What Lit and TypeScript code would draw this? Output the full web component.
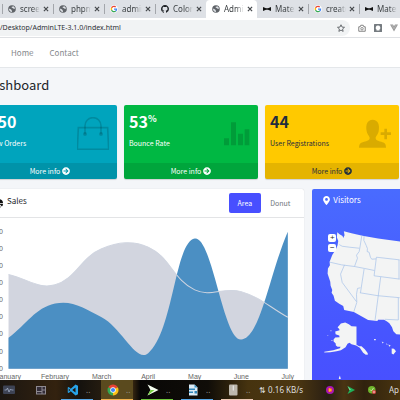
import { LitElement, html, css, svg } from "lit";
import { customElement } from "lit/decorators.js";
import { classMap } from "lit/directives/class-map.js";

const globe = svg`<svg viewBox="0 0 16 16"><circle cx="8" cy="8" r="7.6" fill="#5f6368"/><path d="M2 7.500c2 .2 3 1 4.200 1.400 1 .5.3 1.800 1.500 2.200.8.4.2 1.900.1 3-3.400-.3-6-3-5.800-6.600zM7 2c1 .8 2.600.3 2.400 1.700-.3 1-1.900.6-2.200 1.800.5 1.300 2.400.6 3.400 1.300 1 .8 1.900 1 3.400.7 0-2.800-2.700-5.700-7-5.500z" fill="#dee1e6"/></svg>`;
const google = svg`<svg viewBox="-5 -5 58 58"><circle cx="24" cy="24" r="28" fill="#fff"/><path fill="#EA4335" d="M24 9.500c3.540 0 6.710 1.220 9.210 3.600l6.850-6.850C35.900 2.380 30.470 0 24 0 14.620 0 6.510 5.380 2.560 13.220l7.980 6.190C12.430 13.720 17.740 9.500 24 9.500z"/><path fill="#4285F4" d="M46.980 24.550c0-1.570-.15-3.090-.38-4.550H24v9.020h12.940c-.58 2.960-2.260 5.480-4.780 7.180l7.730 6c4.510-4.180 7.090-10.360 7.090-17.650z"/><path fill="#FBBC05" d="M10.530 28.590c-.48-1.450-.76-2.990-.76-4.590s.27-3.140.76-4.590l-7.980-6.190C.92 16.460 0 20.120 0 24s.92 7.540 2.560 10.780l7.970-6.190z"/><path fill="#34A853" d="M24 48c6.480 0 11.930-2.130 15.890-5.810l-7.730-6c-2.150 1.450-4.920 2.300-8.160 2.300-6.260 0-11.570-4.220-13.470-9.910l-7.980 6.190C6.510 42.620 14.620 48 24 48z"/></svg>`;
const github = svg`<svg viewBox="0 0 16 16"><path fill="#1b1f23" d="M8 0C3.58 0 0 3.58 0 8c0 3.54 2.29 6.53 5.47 7.59.4.07.55-.17.55-.38 0-.19-.01-.82-.01-1.49-2.01.37-2.53-.49-2.69-.94-.09-.23-.48-.94-.82-1.13-.28-.15-.68-.52-.01-.53.63-.01 1.08.58 1.23.82.72 1.21 1.87.87 2.33.66.07-.52.28-.87.51-1.07-1.78-.2-3.64-.89-3.64-3.95 0-.87.31-1.59.82-2.15-.08-.2-.36-1.02.08-2.12 0 0 .67-.21 2.2.82.64-.18 1.32-.27 2-.27.68 0 1.36.09 2 .27 1.53-1.04 2.2-.82 2.2-.82.44 1.1.16 1.92.08 2.12.51.56.82 1.27.82 2.15 0 3.07-1.87 3.75-3.65 3.95.29.25.54.73.54 1.48 0 1.07-.01 1.93-.01 2.2 0 .21.15.46.55.38A8.013 8.013 0 0016 8c0-4.42-3.58-8-8-8z"/></svg>`;
const bowtie = svg`<svg viewBox="0 0 16 16"><path fill="#111" d="M0 4l6 2.500h4L16 4v8l-6-2.500H6L0 12z"/></svg>`;
const close = svg`<svg viewBox="0 0 10 10"><path d="M1.500 1.500l7 7m0-7l-7 7" stroke="#45484c" stroke-width="2" fill="none"/></svg>`;
const arrow = svg`<svg viewBox="0 0 512 512"><path fill="currentColor" d="M256 8c137 0 248 111 248 248S393 504 256 504 8 393 8 256 119 8 256 8zm-28.900 143.600l75.500 72.400H120c-13.300 0-24 10.700-24 24v16c0 13.300 10.700 24 24 24h182.600l-75.500 72.400c-9.700 9.300-9.900 24.800-.4 34.300l11 10.900c9.400 9.400 24.600 9.400 33.900 0L404.300 273c9.400-9.400 9.400-24.600 0-33.900L271.600 106.300c-9.400-9.400-24.600-9.400-33.900 0l-11 10.900c-9.500 9.600-9.300 25.100.4 34.400z"/></svg>`;

const bag = svg`<svg viewBox="0 0 96 100"><path d="M4 32H92L95 97H1Z" fill="none" stroke="currentColor" stroke-width="5"/><path d="M24 52V26a24 24 0 0 1 48 0V52" fill="none" stroke="currentColor" stroke-width="5"/><circle cx="24" cy="51" r="6" fill="currentColor"/><circle cx="72" cy="51" r="6" fill="currentColor"/></svg>`;
const bars = svg`<svg viewBox="0 0 96 100"><path fill="currentColor" d="M18 64h15v21H18zM39 16h15v69H39zM60 50h15v35H60zM80 37h14v48H80z"/></svg>`;
const person = svg`<svg viewBox="0 0 96 100"><path fill="currentColor" d="M0 92c0-12 5-15 15-18 9-2 17-4 17-11 0-5-7-9-9-20-4-20 2-35 18-35s22 15 18 35c-2 11-9 15-9 20 0 7 8 9 17 11 10 3 14 6 14 18zM76 35h8v11h12v8H84v13h-8V54H65v-8h11z"/></svg>`;

const tabs = [
  { icon: globe, text: "screen" },
  { icon: globe, text: "phpmy" },
  { icon: google, text: "admin" },
  { icon: github, text: "Colorl" },
  { icon: globe, text: "Admin", active: true },
  { icon: bowtie, text: "Mater" },
  { icon: google, text: "create" },
  { icon: bowtie, text: "Mater" },
];

const stats = [
  { kind: "teal", value: "150", unit: "", label: "New Orders", icon: bag },
  { kind: "green", value: "53", unit: "%", label: "Bounce Rate", icon: bars },
  { kind: "yellow", value: "44", unit: "", label: "User Registrations", icon: person },
];

const months = ["January", "February", "March", "April", "May", "June", "July"];
const digital = [28, 48, 40, 19, 86, 27, 90];
const electronics = [65, 59, 80, 81, 56, 55, 40];

const LEFT = 25.5;
const STEP = 46.5;
const BASE = 150.5;
const UNIT = 1.71;
const yOf = (v: number) => BASE - (v - 10) * UNIT;

// Smooth curve through the values, with control points weighted by segment length.
function curve(values: number[]): string {
  const p = values.map((v, i) => ({ x: LEFT + i * STEP, y: yOf(v) }));
  const clamp = (y: number) => Math.min(BASE, Math.max(yOf(90), y));
  const ctl = p.map((c, i) => {
    const a = p[i - 1] ?? c;
    const b = p[i + 1] ?? c;
    const d0 = Math.hypot(c.x - a.x, c.y - a.y);
    const d1 = Math.hypot(b.x - c.x, b.y - c.y);
    const f0 = (0.4 * d0) / (d0 + d1);
    const f1 = (0.4 * d1) / (d0 + d1);
    return {
      inX: c.x - f0 * (b.x - a.x), inY: clamp(c.y - f0 * (b.y - a.y)),
      outX: c.x + f1 * (b.x - a.x), outY: clamp(c.y + f1 * (b.y - a.y)),
    };
  });
  let d = `M${p[0].x} ${p[0].y}`;
  for (let i = 1; i < p.length; i++) {
    d += `C${ctl[i - 1].outX} ${ctl[i - 1].outY} ${ctl[i].inX} ${ctl[i].inY} ${p[i].x} ${p[i].y}`;
  }
  return d;
}
const area = (values: number[]) => `${curve(values)}V${BASE}H${LEFT}Z`;

@customElement("browser-bar")
class BrowserBar extends LitElement {
  static styles = css`
    :host { display: block; font-family: "Noto Sans", sans-serif; color: #3c4043; }
    svg { display: block; }
    .tabs { display: flex; height: 18px; background: #dee1e6; padding-left: 2px; overflow: hidden; }
    .tab { flex: 0 0 51px; min-width: 0; box-sizing: border-box; display: flex; align-items: center; padding: 0 4px 0 6px; position: relative; }
    .tab::before { content: ""; position: absolute; left: 0; top: 4px; height: 10px; width: 1px; background: #a3a6ab; }
    .tab.plain::before { display: none; }
    .tab.active { background: #fff; border-radius: 4px 4px 0 0; }
    .icon { width: 8px; height: 8px; flex: none; }
    .label { flex: 1; min-width: 0; margin: 0 3px 0 4px; font-size: 8px; line-height: 12px; white-space: nowrap; overflow: hidden; -webkit-mask-image: linear-gradient(90deg, #000 60%, transparent); mask-image: linear-gradient(90deg, #000 60%, transparent); }
    .close { all: unset; width: 6px; height: 6px; flex: none; }
    .bar { display: flex; align-items: center; height: 19px; background: #fff; border-bottom: 1px solid #dfe1e4; overflow: hidden; }
    .pill { flex: 1; min-width: 0; display: flex; align-items: center; height: 16px; padding-right: 5px; background: #f1f3f4; border-radius: 0 8px 8px 0; }
    .url { flex: 1; min-width: 0; border: 0; padding: 0; background: none; outline: none; font: 7px/12px "Noto Sans", sans-serif; color: #2c3034; }
    .tool { all: unset; width: 8px; height: 8px; flex: none; }
    .tools { display: flex; gap: 8px; margin: 0 2px 0 8px; }
  `;
  render() {
    return html`
      <div class="tabs">
        ${tabs.map((t, i) => html`<div class=${classMap({ tab: true, active: !!t.active, plain: i === 4 || i === 5 })}>
          <span class="icon">${t.icon}</span><span class="label">${t.text}</span>
          <button class="close" aria-label="Close tab">${close}</button>
        </div>`)}
      </div>
      <div class="bar">
        <div class="pill">
          <input class="url" aria-label="Address" value="/Desktop/AdminLTE-3.1.0/index.html" />
          <button class="tool" aria-label="Bookmark"><svg viewBox="0 0 16 16"><path d="M8 1.500l2 4.600 5 .5-3.800 3.300 1.100 4.900L8 12.200l-4.300 2.600 1.100-4.900L1 6.600l5-.5z" fill="none" stroke="#4b4f54" stroke-width="1.600"/></svg></button>
        </div>
        <div class="tools">
          <button class="tool" aria-label="Camera"><svg viewBox="0 0 16 16"><path d="M1.500 5.500h3l1-3h5l1 3h3v9h-13z" fill="none" stroke="#777" stroke-width="1.800"/><circle cx="8" cy="9.500" r="2.500" fill="none" stroke="#777" stroke-width="1.600"/></svg></button>
          <button class="tool" aria-label="Extension"><svg viewBox="0 0 16 16"><rect width="16" height="16" rx="1" fill="#757b80"/><path d="M8 3a4.500 4.500 0 0 1 3 8v2H5v-2a4.500 4.500 0 0 1 3-8z" fill="#fff"/></svg></button>
          <button class="tool" aria-label="Vue tools"><svg viewBox="0 0 16 16"><path d="M0 1h6l2 3.500L10 1h6L8 15z" fill="#999"/><path d="M3.200 1L8 9.500 12.800 1" stroke="#ccc" fill="none"/></svg></button>
        </div>
      </div>`;
  }
}

@customElement("stat-box")
class StatBox extends LitElement {
  static properties = { data: { attribute: false } };
  declare data: (typeof stats)[number];
  static styles = css`
    :host { display: block; min-width: 0; }
    .box { border-radius: 2px; overflow: hidden; color: #fff; box-shadow: 0 1px 1px rgba(0, 0, 0, 0.15); }
    .teal { background: #00a4bd; }
    .green { background: #00b843; }
    .yellow { background: #ffc900; color: #1f2d3d; }
    .inner { display: flex; justify-content: space-between; height: 58px; padding: 0 8px 0 5px; }
    .value { margin: 6px 0 0; font-size: 16px; line-height: 20px; font-weight: 700; }
    .unit { font-size: 9px; line-height: 10px; vertical-align: 6px; }
    .label { margin: 6px 0 0; font-size: 7px; line-height: 12px; white-space: nowrap; }
    .icon { flex: none; width: 32px; height: 33px; margin-top: 12px; color: rgba(0, 0, 0, 0.15); }
    .more { display: flex; align-items: center; justify-content: center; gap: 2px; height: 16px; background: rgba(0, 0, 0, 0.1); color: inherit; text-decoration: none; font-size: 7px; line-height: 12px; }
    .dot { width: 8px; height: 8px; }
    svg { display: block; }
  `;
  render() {
    const s = this.data;
    return html`<div class="box ${s.kind}">
      <div class="inner">
        <div>
          <h3 class="value">${s.value}${s.unit ? html`<span class="unit">${s.unit}</span>` : null}</h3>
          <p class="label">${s.label}</p>
        </div>
        <div class="icon">${s.icon}</div>
      </div>
      <a class="more" href="#">More info <span class="dot">${arrow}</span></a>
    </div>`;
  }
}

@customElement("sales-card")
class SalesCard extends LitElement {
  static styles = css`
    :host { display: block; min-width: 0; background: #fff; border-radius: 2px; box-shadow: 0 0 1px rgba(0, 0, 0, 0.2); }
    .head { display: flex; align-items: center; height: 28px; padding: 0 5px 0 11px; border-bottom: 1px solid #e3e4e6; }
    .pie { width: 9px; height: 9px; margin-right: 4px; }
    .title { flex: 1; margin: 0 0 4px; font-size: 8px; line-height: 12px; font-weight: 400; color: #212529; }
    .pill { border: 0; padding: 0 9px; height: 20px; font: inherit; font-size: 7px; line-height: 12px; background: none; color: #6f747b; border-radius: 2px; }
    .on { background: #484fff; color: #fff; }
    svg { display: block; width: 100%; }
    .axis { font: 7px "Liberation Sans", sans-serif; fill: #666; }
  `;
  render() {
    return html`
      <div class="head">
        <svg class="pie" viewBox="0 0 16 16"><path d="M7 1.500V9l5.300 5.300A7.400 7.400 0 1 1 7 1.500zM9 0a7.500 7.500 0 0 1 7 7H9zM9.500 8.500H16a7 7 0 0 1-2 5z" fill="#111"/></svg>
        <h3 class="title">Sales</h3>
        <button class="pill on">Area</button><button class="pill">Donut</button>
      </div>
      <svg viewBox="0 0 321 163" role="img" aria-label="Sales by month">
        <path d=${area(electronics)} fill="#d2d5df" />
        <path d=${area(digital)} fill="#4b8fc3" />
        <path d=${curve(electronics)} fill="none" stroke="#d0d5e0" />
        ${[90, 80, 70, 60, 50, 40, 30, 20, 10].map((v) => svg`<text class="axis" x="20" y=${yOf(v) + 2} text-anchor="end">${v}</text>`)}
        ${months.map((m, i) => svg`<text class="axis" x=${LEFT + i * STEP} y="161" text-anchor="middle">${m}</text>`)}
      </svg>`;
  }
}

@customElement("visitors-card")
class VisitorsCard extends LitElement {
  static styles = css`
    :host { display: block; min-width: 0; background: linear-gradient(#496bff, #4755ff 75%, #4850ff); border-radius: 2px 0 0 0; color: #fff; position: relative; }
    .head { display: flex; align-items: center; gap: 3px; height: 22px; padding-left: 11px; }
    .pin { width: 7px; height: 9px; }
    .title { margin: 0; font-size: 8px; line-height: 12px; font-weight: 400; }
    .map { display: block; width: 100%; margin-top: 15px; }
    .zoom { position: absolute; left: 16px; top: 45px; display: grid; gap: 2px; }
    .zoom button { border: 0; padding: 0; width: 8px; height: 8px; border-radius: 2px; background: #fff; color: #292929; font: 8px/8px "Liberation Sans", sans-serif; }
  `;
  render() {
    return html`
      <div class="head">
        <svg class="pin" viewBox="0 0 384 512"><path fill="#fff" d="M172.268 501.670C26.970 291.031 0 269.413 0 192 0 85.961 85.961 0 192 0s192 85.961 192 192c0 77.413-26.970 99.031-172.268 309.670-9.535 13.774-29.930 13.773-39.464 0zM192 272c44.183 0 80-35.817 80-80s-35.817-80-80-80-80 35.817-80 80 35.817 80 80 80z"/></svg>
        <h3 class="title">Visitors</h3>
      </div>
      <svg class="map" viewBox="21 120 264 462" role="img" aria-label="Map of the United States">
        <g fill="#f3f4f4">
          <path d="M97 139L104 145L113 150L115 156L119 148L117 136L140 142L173 149L220 158L290 167V447L275 446L266 437L262 425L254 413L247 408L238 402L220 402L218 406L190 403L147 379L118 373L115 361L103 354L90 345L86 330L80 321L82 313L77 300L76 288L68 264L69 248L75 238L74 228L82 207L93 190L98 178L100 165L96 155Z"/>
          <path d="M121 411L132 416L140 422L155 423V478L163 482L170 482L180 491L188 502L190 507L183 508L175 502L165 487L154 480L140 476L134 472L128 475L122 485L108 494L95 497L76 500L58 501V499L85 494L105 488L107 484L98 484L93 480L92 473L86 468L86 462L91 456L104 455L103 450L92 446L91 438L104 434L103 430L98 425L103 420L108 414Z"/>
          <path d="M261 489L268 490L274 497L266 507L261 504ZM208 460h5v4h-5zM231 468l6 3-3 3zM244 474l6 2-5 1zM251 477l7 3-4 4zM105 570L102 578V582H108Z"/>
          <path d="M67 449h3v2h-3zM76 434h4v3h-4zM79 463h4v3h-4z" opacity=".6"/>
        </g>
        <path fill="none" stroke="#a3c0e8" stroke-width="2" d="M103 176L112 181L135 184L164 187M171 149L165 187L163 197L155 208L158 217L149 242M75 229L110 237L149 242L180 248L209 254M178 150L177 163L184 178L188 188L187 197L193 199L197 214L201 220L214 219M215 214L285 222M215 214L208 270L285 280M119 237L107 265L112 290L155 348M178 249L167 321M167 306L158 308L155 326L156 350L147 378M165 321L220 330L285 336M228 273L211 403M283 222V280M281 336V403L240 401"/>
      </svg>
      <div class="zoom"><button aria-label="Zoom in">+</button><button aria-label="Zoom out">−</button></div>`;
  }
}

@customElement("task-bar")
class TaskBar extends LitElement {
  static styles = css`
    :host { display: flex; height: 20px; overflow: hidden; color: #ddd; font: 8px/12px "Noto Sans", sans-serif; background: linear-gradient(90deg, #1b1611, #33220f 14%, #15120e 20%, #3b2a12 33%, #080706 35%, #100d08 52%, #46330f 62%, #4c3711 74%, #2a1f13 82%, #4a3413 86%, #30220e 91%, #49340f); }
    svg { display: block; width: 12px; height: 12px; }
    .launch { display: flex; align-items: center; gap: 20px; padding: 0 14px 0 3px; }
    .apps { display: flex; gap: 8px; }
    .app { all: unset; box-sizing: border-box; width: 32px; height: 20px; display: flex; align-items: center; gap: 7px; padding-left: 6px; border-bottom: 1px solid; }
    .dots { color: #999; }
    .blue { border-color: #58a8e8; }
    .orange { border-color: #f2b24d; background: #5a4a1e; }
    .lime { border-color: #70c83c; }
    .peach { border-color: #edc9b4; }
    .net { align-self: center; margin-left: 6px; white-space: nowrap; }
    .tray { display: flex; align-items: center; gap: 13px; margin-left: auto; }
    .tray svg { width: 8px; height: 8px; }
    .clock { width: 11px; overflow: hidden; }
  `;
  render() {
    const apps = [
      { c: "blue", n: "Editor", i: svg`<svg viewBox="0 0 24 24"><path d="M17 1l5 2.500v17L17 23 7.500 14.500 3.500 18 1.500 17V7l2-1 4 3.500zM17 7l-6.500 5 6.500 5zM3.500 9v6l3-3z" fill="#28a4ea" fill-rule="evenodd"/></svg>` },
      { c: "orange", n: "Browser", i: svg`<svg viewBox="0 0 24 24"><path d="M12 12L2.500 6.500A11 11 0 0 1 21.500 6.500z" fill="#e94235"/><path d="M12 12L21.500 6.500A11 11 0 0 1 12 23z" fill="#fbc116"/><path d="M12 12V23A11 11 0 0 1 2.500 6.500z" fill="#34a853"/><circle cx="12" cy="12" r="5.500" fill="#fff"/><circle cx="12" cy="12" r="4.200" fill="#4285f4"/></svg>` },
      { c: "lime", n: "Player", i: svg`<svg viewBox="0 0 24 24"><path d="M1 1L23 12 1 23 7 12z" fill="#f5fff0"/><path d="M1 23L7 12H15z" fill="#73d13d"/></svg>` },
      { c: "blue", n: "Writer", i: svg`<svg viewBox="0 0 24 24"><path d="M4 1h11l6 6v16H4z" fill="#dcebf5"/><path d="M15 1v6h6z" fill="#3493c8"/><path d="M4 9h12v3H4zM4 15h8v3H4zM15 14h5v5h-5z" fill="#2f86ba"/></svg>` },
      { c: "peach", n: "Archive", i: svg`<svg viewBox="0 0 24 24"><rect x="4" y="1" width="17" height="22" rx="2" fill="#bdb8ad"/><path d="M12.500 3v10" stroke="#eee" stroke-width="2"/></svg>` },
    ];
    return html`
      <div class="launch">
        <svg viewBox="0 0 24 24"><rect x="0" y="3" width="24" height="17" rx="2" fill="#3d4354"/><path d="M3 12h4l2-4 3 8 3-6 2 2h4" stroke="#a7b4cc" stroke-width="1.500" fill="none"/></svg>
        <svg viewBox="0 0 24 24"><rect x="2" y="4" width="20" height="17" fill="#8e8990"/><path d="M4 6h9v8H4zM15 6h5v5h-5zM4 16h9v3H4zM15 13h5v6h-5z" fill="#332d38"/></svg>
      </div>
      <div class="apps">${apps.map((a) => html`<button class="app ${a.c}" aria-label=${a.n}>${a.i}<span class="dots">..</span></button>`)}</div>
      <span class="net">⇅ 0.16 KB/s</span>
      <div class="tray">
        <svg viewBox="0 0 16 16"><circle cx="8" cy="8" r="8" fill="#a714b8"/><circle cx="8" cy="8" r="4.500" fill="#e95043"/><path d="M6 4l6 4-6 4z" fill="#ffb037"/></svg>
        <svg viewBox="0 0 16 16"><path d="M1 0L16 8 1 16 5 8z" fill="#20b15a"/><path d="M1 0l7 8H5z" fill="#8be0a0"/></svg>
        <svg viewBox="0 0 16 16"><circle cx="7.500" cy="7.500" r="7.500" fill="#6fb52c"/><path d="M4 7l3 3 4-6" stroke="#ddf2bd" stroke-width="1.500" fill="none"/><circle cx="12" cy="12" r="4" fill="#db4747"/><circle cx="12" cy="12" r="1.500" fill="#fff"/></svg>
        <span class="clock">Ap</span>
      </div>`;
  }
}

@customElement("app-root")
class AppRoot extends LitElement {
  static styles = css`
    :host { display: flex; flex-direction: column; height: 100vh; overflow: hidden; background: #f4f6f9; font-family: "Noto Sans CJK SC", "Source Sans Pro", sans-serif; }
    browser-bar, task-bar { flex: none; }
    .nav { flex: none; display: flex; align-items: center; gap: 16px; height: 29px; padding-left: 11px; background: #fff; border-bottom: 1px solid #e4e7ea; }
    .nav a { font-size: 8px; line-height: 12px; color: #85888c; text-decoration: none; }
    .page { flex: 1; min-height: 0; overflow: hidden; }
    .content { margin: 0 1px 0 -17px; }
    .title { margin: 0; padding: 7px 0 10px; font-size: 13px; line-height: 20px; font-weight: 400; color: #212529; }
    .stats { display: grid; grid-template-columns: repeat(3, minmax(0, 1fr)); gap: 7px; }
    .cards { display: grid; grid-template-columns: 11fr 3fr; gap: 8px; margin: 10px -1px 0 0; }
  `;
  render() {
    return html`
      <browser-bar></browser-bar>
      <nav class="nav"><a href="#">Home</a><a href="#">Contact</a></nav>
      <main class="page">
        <div class="content">
          <h1 class="title">Dashboard</h1>
          <section class="stats">${stats.map((s) => html`<stat-box .data=${s}></stat-box>`)}</section>
          <section class="cards"><sales-card></sales-card><visitors-card></visitors-card></section>
        </div>
      </main>
      <task-bar></task-bar>`;
  }
}
